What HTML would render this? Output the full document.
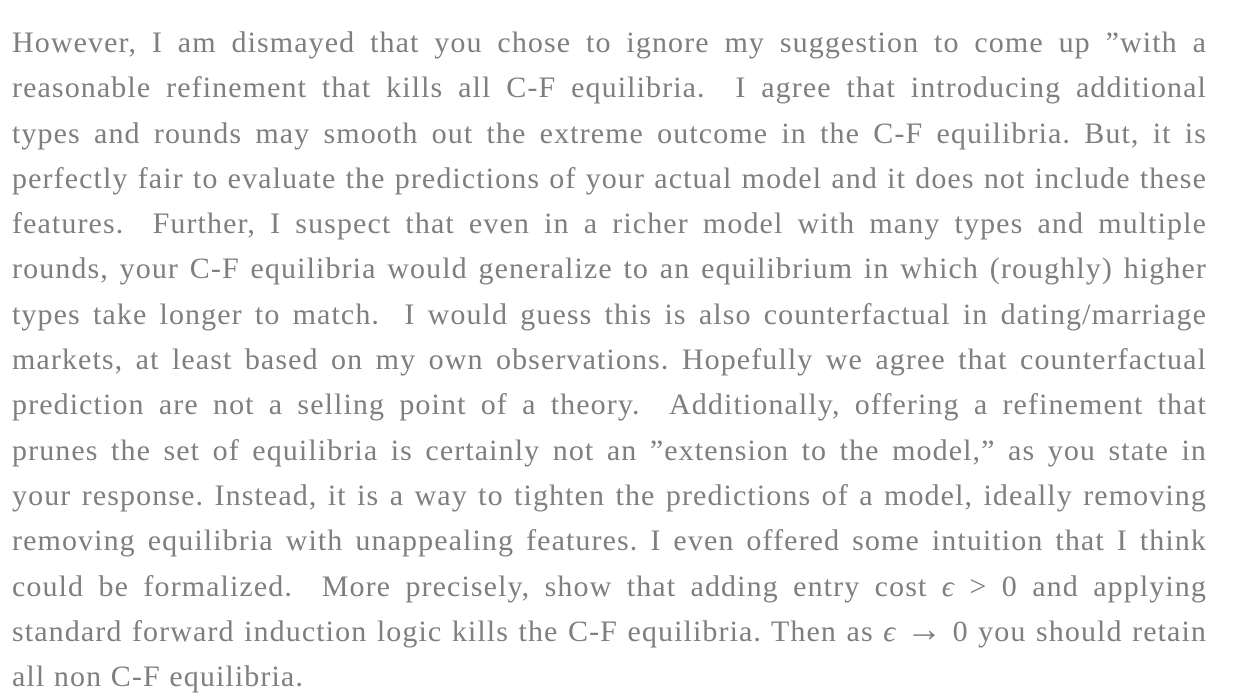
<!DOCTYPE html>
<html><head><meta charset="utf-8"><style>
html,body{margin:0;padding:0;background:#fff;width:1242px;height:700px;overflow:hidden}
.w{position:absolute;left:12px;top:20px;width:1195px;font-family:"Liberation Serif",serif;font-size:30px;letter-spacing:1.1px;color:#7f7f7f}
.l{height:45.3px;line-height:45.3px;white-space:nowrap;text-align:justify;text-align-last:justify}
.last{text-align-last:left}
i{font-style:italic}
.ar{font-size:1.2em;line-height:1}
</style></head><body><div class="w">
<div class="l">However, I am dismayed that you chose to ignore my suggestion to come up ”with a</div>
<div class="l">reasonable refinement that kills all C-F equilibria. &nbsp;I agree that introducing additional</div>
<div class="l">types and rounds may smooth out the extreme outcome in the C-F equilibria. But, it is</div>
<div class="l">perfectly fair to evaluate the predictions of your actual model and it does not include these</div>
<div class="l">features. &nbsp;Further, I suspect that even in a richer model with many types and multiple</div>
<div class="l">rounds, your C-F equilibria would generalize to an equilibrium in which (roughly) higher</div>
<div class="l">types take longer to match. &nbsp;I would guess this is also counterfactual in dating/marriage</div>
<div class="l">markets, at least based on my own observations. Hopefully we agree that counterfactual</div>
<div class="l">prediction are not a selling point of a theory. &nbsp;Additionally, offering a refinement that</div>
<div class="l">prunes the set of equilibria is certainly not an ”extension to the model,” as you state in</div>
<div class="l">your response. Instead, it is a way to tighten the predictions of a model, ideally removing</div>
<div class="l">removing equilibria with unappealing features. I even offered some intuition that I think</div>
<div class="l">could be formalized. &nbsp;More precisely, show that adding entry cost <i>ϵ</i> &gt; 0 and applying</div>
<div class="l">standard forward induction logic kills the C-F equilibria. Then as <i>ϵ</i> <span class="ar">→</span> 0 you should retain</div>
<div class="l last">all non C-F equilibria.</div>
</div></body></html>
